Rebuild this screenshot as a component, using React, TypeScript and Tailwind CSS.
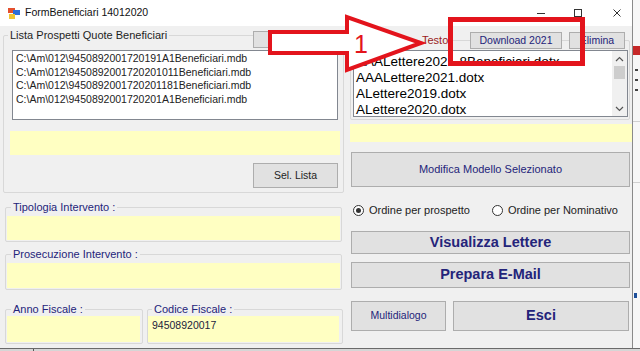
import React from 'react';

const navy = 'text-[#24247a]';

const Btn = ({ className, children }: { className: string; children?: React.ReactNode }) => (
  <div className={`flex items-center justify-center bg-[#e1e1e1] border border-[#adadad] ${className}`}>
    {children}
  </div>
);

const Legend = ({ className, children }: { className: string; children: React.ReactNode }) => (
  <span className={`bg-[#f0f0f0] px-[2px] leading-[14px] text-[11px] whitespace-nowrap ${className}`}>{children}</span>
);

const Chevron = ({ up }: { up?: boolean }) => (
  <svg width="9" height="6" viewBox="0 0 9 6">
    <polyline
      points={up ? '1,5 4.5,1.5 8,5' : '1,1 4.5,4.5 8,1'}
      fill="none"
      stroke="#555"
      strokeWidth="1.2"
    />
  </svg>
);

const leftFiles = [
  'C:\\Am\\012\\9450892001720191A1Beneficiari.mdb',
  'C:\\Am\\012\\9450892001720201011Beneficiari.mdb',
  'C:\\Am\\012\\9450892001720201181Beneficiari.mdb',
  'C:\\Am\\012\\9450892001720201A1Beneficiari.mdb',
];

const templates = [
  'AAALettere2021-8Beneficiari.dotx',
  'AAALettere2021.dotx',
  'ALettere2019.dotx',
  'ALettere2020.dotx',
];

export default function App() {
  return (
    <div className="relative w-[640px] h-[351px] overflow-hidden bg-[#ececec] font-['Liberation_Sans',Arial,sans-serif] text-[#222]">
      <div className="flex h-[348px]">
        {/* window */}
        <div className="w-[633px] flex flex-col border-r border-[#8a8a8a]">
          {/* title bar */}
          <div className="h-[26px] bg-white flex items-center pl-[8px] pr-[11px]">
            <svg width="12" height="12" viewBox="0 0 12 12">
              <rect x="0" y="1" width="7" height="5" fill="#e4502e" />
              <rect x="5" y="3" width="7" height="5" fill="#2f6ed8" />
              <rect x="1" y="7" width="6" height="5" fill="#f3c531" />
            </svg>
            <span className="ml-[5px] text-[10.5px] text-[#111]">FormBeneficiari 14012020</span>
            <div className="ml-auto flex items-center">
              <div className="w-[8px] h-[1px] bg-[#333]" />
              <div className="ml-[29px] w-[8px] h-[8px] border border-[#333]" />
              <svg className="ml-[31px]" width="8" height="8" viewBox="0 0 8 8">
                <path d="M0.5 0.5 L7.5 7.5 M7.5 0.5 L0.5 7.5" stroke="#333" strokeWidth="1" />
              </svg>
            </div>
          </div>

          {/* body */}
          <div className="flex-1 bg-[#f0f0f0] flex pl-[3px] gap-[6px]">
            {/* left column */}
            <div className="w-[341px] flex flex-col">
              <div className="mt-[9px] border border-[#d8d8d8] rounded-[2px] flex flex-col pb-[4px]">
                <div className="-mt-[8px] h-[20px] flex items-start">
                  <Legend className="ml-[4px] text-[#1e1e1e]">Lista Prospetti Quote Beneficiari</Legend>
                  <Btn className="ml-auto mr-[5px] mt-[3px] w-[85px] h-[17px]" />
                </div>
                <div className="mt-[2px] ml-[8px] w-[326px] h-[70px] border border-[#828790] bg-white pl-[3px] pt-[1px] text-[10.5px] leading-[13.5px]">
                  {leftFiles.map((f) => (
                    <div key={f} className="whitespace-nowrap">{f}</div>
                  ))}
                </div>
                <div className="mt-[11px] ml-[6px] w-[330px] h-[24px] bg-[#ffffc2]" />
                <Btn className="mt-[8px] self-end mr-[5px] w-[85px] h-[25px] text-[10.5px] text-[#1e1e1e]">Sel. Lista</Btn>
              </div>

              <div className="mt-[14px] ml-[2px] w-[337px] border border-[#d8d8d8] rounded-[2px] flex flex-col pb-[1px]">
                <div className="-mt-[8px] h-[14px] flex">
                  <Legend className={`ml-[5px] ${navy}`}>Tipologia Intervento :</Legend>
                </div>
                <div className="mt-[2px] ml-[1px] w-[333px] h-[24px] bg-[#ffffc2]" />
              </div>

              <div className="mt-[12px] ml-[2px] w-[337px] border border-[#d8d8d8] rounded-[2px] flex flex-col pb-[1px]">
                <div className="-mt-[8px] h-[14px] flex">
                  <Legend className={`ml-[5px] ${navy}`}>Prosecuzione Intervento :</Legend>
                </div>
                <div className="mt-[2px] ml-[1px] w-[333px] h-[25px] bg-[#ffffc2]" />
              </div>

              <div className="mt-[19px] ml-[2px] flex gap-[4px]">
                <div className="w-[138px] border border-[#d8d8d8] rounded-[2px] flex flex-col pb-[1px]">
                  <div className="-mt-[8px] h-[14px] flex">
                    <Legend className={`ml-[5px] ${navy}`}>Anno Fiscale :</Legend>
                  </div>
                  <div className="ml-[1px] w-[133px] h-[26px] bg-[#ffffc2]" />
                </div>
                <div className="w-[196px] border border-[#d8d8d8] rounded-[2px] flex flex-col pb-[1px]">
                  <div className="-mt-[8px] h-[14px] flex">
                    <Legend className={`ml-[4px] ${navy}`}>Codice Fiscale :</Legend>
                  </div>
                  <div className="w-[191px] h-[26px] bg-[#ffffc2] pl-[4px] pt-[3px] text-[10.5px] leading-[13px] text-[#1c1c3c]">
                    94508920017
                  </div>
                </div>
              </div>
            </div>

            {/* right column */}
            <div className="w-[282px] flex flex-col">
              <div className="mt-[14px] w-[280px] border border-[#d8d8d8] rounded-[2px] flex flex-col pb-[2px]">
                <div className="-mt-[9px] h-[17px] flex items-start">
                  <Legend className="ml-[69px] mt-[1px] text-[#9a1c1c]">Testo</Legend>
                  <div className="ml-auto mr-[4px] flex gap-[7px]">
                    <Btn className={`w-[92px] h-[17px] text-[10.5px] ${navy}`}>Download 2021</Btn>
                    <Btn className={`w-[56px] h-[17px] text-[10.5px] ${navy}`}>Elimina</Btn>
                  </div>
                </div>
                <div className="mt-[1px] ml-[2px] w-[275px] h-[67px] border border-[#828790] bg-white flex overflow-hidden">
                  <div className="flex-1 pl-[2px] pt-[3px] text-[13.5px] leading-[16px] text-black">
                    {templates.map((t) => (
                      <div key={t} className="whitespace-nowrap">{t}</div>
                    ))}
                  </div>
                  <div className="w-[15px] bg-[#f0f0f0] flex flex-col items-center">
                    <div className="h-[15px] flex items-center justify-center">
                      <Chevron up />
                    </div>
                    <div className="w-[11px] h-[13px] bg-[#cdcdcd]" />
                    <div className="mt-auto h-[15px] flex items-center justify-center">
                      <Chevron />
                    </div>
                  </div>
                </div>
              </div>

              <div className="mt-[4px] w-[282px] h-[18px] bg-[#ffffc2]" />

              <Btn className={`mt-[10px] ml-[1px] w-[279px] h-[35px] text-[11px] ${navy}`}>Modifica Modello Selezionato</Btn>

              <div className="mt-[16px] ml-[3px] h-[14px] flex items-center text-[11px] text-[#222]">
                <div className="w-[11px] h-[11px] rounded-full border border-[#333] bg-white flex items-center justify-center">
                  <div className="w-[5px] h-[5px] rounded-full bg-[#333]" />
                </div>
                <span className="ml-[5px]">Ordine per prospetto</span>
                <div className="ml-[22px] w-[11px] h-[11px] rounded-full border border-[#333] bg-white" />
                <span className="ml-[5px]">Ordine per Nominativo</span>
              </div>

              <Btn className={`mt-[14px] ml-[1px] w-[279px] h-[23px] text-[14.5px] font-bold ${navy}`}>Visualizza Lettere</Btn>
              <Btn className={`mt-[8px] ml-[1px] w-[279px] h-[26px] text-[14.5px] font-bold ${navy}`}>Prepara E-Mail</Btn>

              <div className="mt-[13px] ml-[1px] flex gap-[7px]">
                <Btn className={`w-[95px] h-[30px] text-[10.5px] ${navy}`}>Multidialogo</Btn>
                <Btn className={`w-[176px] h-[30px] text-[14.5px] font-bold ${navy}`}>Esci</Btn>
              </div>
            </div>
          </div>
        </div>

        {/* window behind, right edge */}
        <div className="flex-1 bg-[#f7f7f7] flex flex-col">
          <div className="mt-[46px] h-[9px] bg-[#c62828]" />
          <div className="mt-[14px] ml-[2px] w-[3px] h-[2px] bg-[#444]" />
          <div className="mt-[8px] ml-[2px] w-[3px] h-[2px] bg-[#444]" />
          <div className="mt-[8px] ml-[2px] w-[3px] h-[2px] bg-[#444]" />
          <div className="mt-[30px] h-[1px] bg-[#d0d0d0]" />
          <div className="mt-[60px] h-[1px] bg-[#d0d0d0]" />
          <div className="mt-[110px] ml-[1px] w-[3px] h-[5px] bg-[#1d4f9a]" />
        </div>
      </div>
      <div className="h-[3px] border-t border-[#6a6a6a] bg-[#d6d6d6] flex">
        <div className="ml-[33px] w-[1px] h-full bg-[#555]" />
      </div>

      {/* red annotation on top of the screenshot */}
      <svg className="absolute left-0 top-0 pointer-events-none" width="640" height="351" viewBox="0 0 640 351">
        <polygon
          points="270,32 347,32 347,17 421,43 347,70 347,53 270,53"
          fill="white"
          stroke="#e3141c"
          strokeWidth="4"
          strokeLinejoin="miter"
        />
        <text x="354" y="53" fontSize="25" fill="#e3141c" fontFamily="Liberation Sans, Arial, sans-serif">
          1
        </text>
        <rect x="450.5" y="19.5" width="132" height="44" fill="none" stroke="#e3141c" strokeWidth="5" />
      </svg>
    </div>
  );
}
